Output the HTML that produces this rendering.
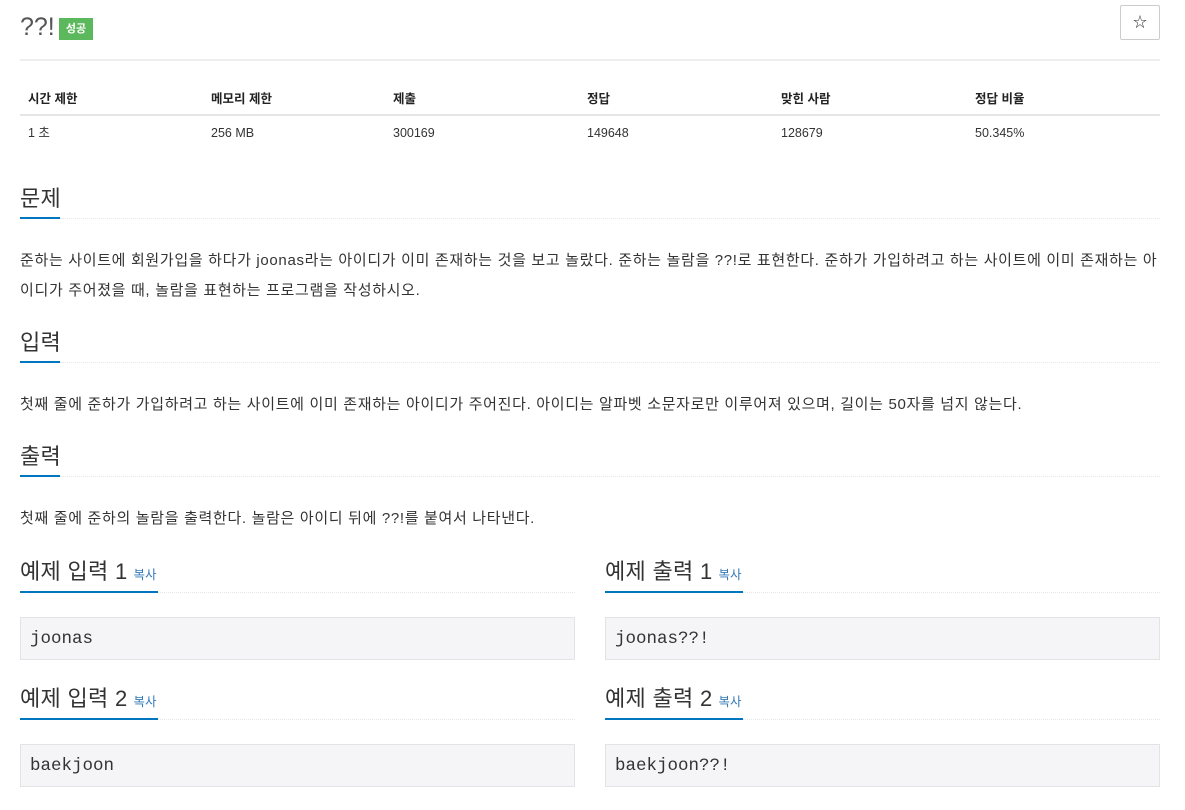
<!DOCTYPE html>
<html><head><meta charset="utf-8"><style>
*{margin:0;padding:0;box-sizing:border-box}
body{width:1185px;height:810px;background:#fff;font-family:"Liberation Sans","Noto Sans CJK KR",sans-serif;color:#333;position:relative;overflow:hidden}
.a{position:absolute;white-space:nowrap}
.h{font-size:22px;color:#333;line-height:28px;letter-spacing:0.3px}
.ul{position:absolute;height:2px;background:#0076c0}
.dl{position:absolute;height:0;border-top:1px dotted #e6e6e6}
.p{font-size:15px;color:#333;line-height:20px;letter-spacing:0.67px}
.th{font-size:12.5px;font-weight:bold;color:#222;line-height:16px}
.td{font-size:12.5px;color:#333;line-height:16px}
.box{position:absolute;background:#f5f5f7;border:1px solid #e3e3e6;font-family:"Liberation Mono",monospace;font-size:17.5px;color:#333;padding:0 9px;height:43px;line-height:42px}
.cp{font-size:12.5px;color:#337ab7;margin-left:6px;letter-spacing:0}
</style></head><body>
<div class="a" style="left:20px;top:11px;font-size:25px;color:#555;line-height:32px">??!</div>
<div class="a" style="left:59px;top:18px;width:34px;height:22px;background:#5cb85c;color:#fff;font-size:11px;font-weight:bold;text-align:center;line-height:22px">성공</div>
<div class="a" style="left:1120px;top:5px;width:40px;height:35px;border:1px solid #ccc;border-radius:2px;text-align:center;line-height:33px;font-size:14px;color:#333">☆</div>
<div class="a" style="left:20px;top:59px;width:1140px;height:2px;background:#eee"></div>
<div class="a th" style="left:28px;top:91px">시간 제한</div>
<div class="a th" style="left:211px;top:91px">메모리 제한</div>
<div class="a th" style="left:393px;top:91px">제출</div>
<div class="a th" style="left:587px;top:91px">정답</div>
<div class="a th" style="left:781px;top:91px">맞힌 사람</div>
<div class="a th" style="left:975px;top:91px">정답 비율</div>
<div class="a" style="left:20px;top:114px;width:1140px;height:2px;background:#e5e5e5"></div>
<div class="a td" style="left:28px;top:125px">1 초</div>
<div class="a td" style="left:211px;top:125px">256 MB</div>
<div class="a td" style="left:393px;top:125px">300169</div>
<div class="a td" style="left:587px;top:125px">149648</div>
<div class="a td" style="left:781px;top:125px">128679</div>
<div class="a td" style="left:975px;top:125px">50.345%</div>

<div class="a h" style="left:20px;top:185px">문제</div>
<div class="dl" style="left:60px;top:218px;width:1100px"></div>
<div class="ul" style="left:20px;top:217px;width:40px"></div>
<div class="a p" style="left:20px;top:251px">준하는 사이트에 회원가입을 하다가 joonas라는 아이디가 이미 존재하는 것을 보고 놀랐다. 준하는 놀람을 ??!로 표현한다. 준하가 가입하려고 하는 사이트에 이미 존재하는 아</div>
<div class="a p" style="left:20px;top:281px">이디가 주어졌을 때, 놀람을 표현하는 프로그램을 작성하시오.</div>

<div class="a h" style="left:20px;top:329px">입력</div>
<div class="dl" style="left:60px;top:362px;width:1100px"></div>
<div class="ul" style="left:20px;top:361px;width:40px"></div>
<div class="a p" style="left:20px;top:395px">첫째 줄에 준하가 가입하려고 하는 사이트에 이미 존재하는 아이디가 주어진다. 아이디는 알파벳 소문자로만 이루어져 있으며, 길이는 50자를 넘지 않는다.</div>

<div class="a h" style="left:20px;top:443px">출력</div>
<div class="dl" style="left:60px;top:476px;width:1100px"></div>
<div class="ul" style="left:20px;top:475px;width:40px"></div>
<div class="a p" style="left:20px;top:509px">첫째 줄에 준하의 놀람을 출력한다. 놀람은 아이디 뒤에 ??!를 붙여서 나타낸다.</div>

<div class="a h" style="left:20px;top:558px">예제 입력 1<span class="cp">복사</span></div>
<div class="dl" style="left:158px;top:592px;width:417px"></div>
<div class="ul" style="left:20px;top:591px;width:138px"></div>
<div class="box" style="left:20px;top:617px;width:555px">joonas</div>

<div class="a h" style="left:605px;top:558px">예제 출력 1<span class="cp">복사</span></div>
<div class="dl" style="left:743px;top:592px;width:417px"></div>
<div class="ul" style="left:605px;top:591px;width:138px"></div>
<div class="box" style="left:605px;top:617px;width:555px">joonas??!</div>

<div class="a h" style="left:20px;top:685px">예제 입력 2<span class="cp">복사</span></div>
<div class="dl" style="left:158px;top:719px;width:417px"></div>
<div class="ul" style="left:20px;top:718px;width:138px"></div>
<div class="box" style="left:20px;top:744px;width:555px">baekjoon</div>

<div class="a h" style="left:605px;top:685px">예제 출력 2<span class="cp">복사</span></div>
<div class="dl" style="left:743px;top:719px;width:417px"></div>
<div class="ul" style="left:605px;top:718px;width:138px"></div>
<div class="box" style="left:605px;top:744px;width:555px">baekjoon??!</div>
</body></html>
